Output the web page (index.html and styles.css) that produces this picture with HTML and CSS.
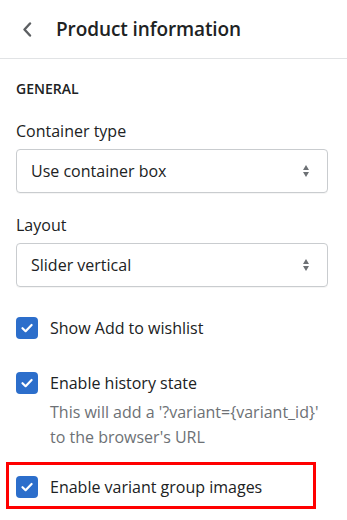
FILE: index.html
```html
<!DOCTYPE html>
<html lang="en">
<head>
<meta charset="utf-8">
<title>Product information</title>
<link rel="stylesheet" href="styles.css">
</head>
<body>
<div class="panel">
  <header class="header">
    <button class="back" aria-label="Back">
      <svg width="10" height="15" viewBox="0 0 10 15"><path d="M8 1.5 L2.5 7.5 L8 13.5" fill="none" stroke="#5c5f62" stroke-width="2.4" stroke-linecap="round" stroke-linejoin="round"/></svg>
    </button>
    <h1 class="title">Product information</h1>
  </header>
  <section class="section">
    <h2 class="subheading">GENERAL</h2>
    <div class="field">
      <div class="label">Container type</div>
      <div class="select">
        <span class="select-value">Use container box</span>
        <span class="arrows"><span class="up"></span><span class="down"></span></span>
      </div>
    </div>
    <div class="field">
      <div class="label">Layout</div>
      <div class="select">
        <span class="select-value">Slider vertical</span>
        <span class="arrows"><span class="up"></span><span class="down"></span></span>
      </div>
    </div>
    <div class="check-row first">
      <span class="checkbox"><svg width="22" height="22" viewBox="0 0 22 22"><path d="M6.5 11.2 L9.6 14.2 L15.6 8" fill="none" stroke="#fff" stroke-width="2.2" stroke-linecap="round" stroke-linejoin="round"/></svg></span>
      <div class="check-text">
        <div class="check-label">Show Add to wishlist</div>
      </div>
    </div>
    <div class="check-row second">
      <span class="checkbox"><svg width="22" height="22" viewBox="0 0 22 22"><path d="M6.5 11.2 L9.6 14.2 L15.6 8" fill="none" stroke="#fff" stroke-width="2.2" stroke-linecap="round" stroke-linejoin="round"/></svg></span>
      <div class="check-text">
        <div class="check-label">Enable history state</div>
        <div class="help">This will add a '?variant={variant_id}' to the browser's URL</div>
      </div>
    </div>
    <div class="highlight">
      <div class="check-row">
        <span class="checkbox"><svg width="22" height="22" viewBox="0 0 22 22"><path d="M6.5 11.2 L9.6 14.2 L15.6 8" fill="none" stroke="#fff" stroke-width="2.2" stroke-linecap="round" stroke-linejoin="round"/></svg></span>
        <div class="check-text">
          <div class="check-label">Enable variant group images</div>
        </div>
      </div>
    </div>
  </section>
</div>
</body>
</html>
```

FILE: styles.css
```css
* { box-sizing: border-box; }
html, body { margin: 0; padding: 0; background: #fff; }
body {
  font-family: "Open Sans", "Noto Sans", sans-serif;
  font-size: 16px;
  line-height: 24px;
  color: #202223;
  width: 347px;
  height: 520px;
  overflow: hidden;
}
.header {
  height: 59px;
  display: flex;
  align-items: center;
  border-bottom: 1px solid #e1e3e5;
  padding-left: 22px;
}
.back {
  border: 0;
  background: none;
  padding: 0;
  width: 34px;
  height: 20px;
  display: flex;
  align-items: center;
  cursor: pointer;
}
.title {
  margin: 0;
  font-size: 19px;
  font-weight: 600;
  line-height: 28px;
  color: #202223;
  letter-spacing: -0.1px;
}
.section {
  padding: 20px 19px 0 16px;
}
.subheading {
  margin: 0 0 20px;
  font-size: 14px;
  font-weight: 600;
  line-height: 20px;
  color: #202223;
  letter-spacing: 0;
}
.field { margin-bottom: 20px; }
.label {
  line-height: 24px;
  margin-bottom: 6px;
}
.select {
  height: 44px;
  border: 1px solid #c9cccf;
  border-radius: 4px;
  display: flex;
  align-items: center;
  justify-content: space-between;
  padding: 0 18px 0 14px;
  box-shadow: 0 1px 0 rgba(0,0,0,0.04);
}
.arrows {
  display: flex;
  flex-direction: column;
  gap: 2px;
}
.up, .down {
  width: 0; height: 0;
  border-left: 3.5px solid transparent;
  border-right: 3.5px solid transparent;
}
.up { border-bottom: 5px solid #6d7175; }
.down { border-top: 5px solid #6d7175; }
.check-row {
  display: flex;
  align-items: flex-start;
  gap: 12px;
}
.check-row.first { margin-top: 29px; }
.check-row.second { margin-top: 31px; }
.checkbox {
  width: 22px;
  height: 22px;
  border-radius: 4px;
  background: #2c6ecb;
  flex: none;
  display: flex;
  margin-top: 1px;
}
.check-label { line-height: 24px; }
.help {
  color: #6d7175;
  line-height: 25px;
  margin-top: 5px;
}
.highlight {
  margin: 12px 12px 0 -10px;
  border: 3px solid #ff0000;
  padding: 10px 7px 7px 7px;
}
```
